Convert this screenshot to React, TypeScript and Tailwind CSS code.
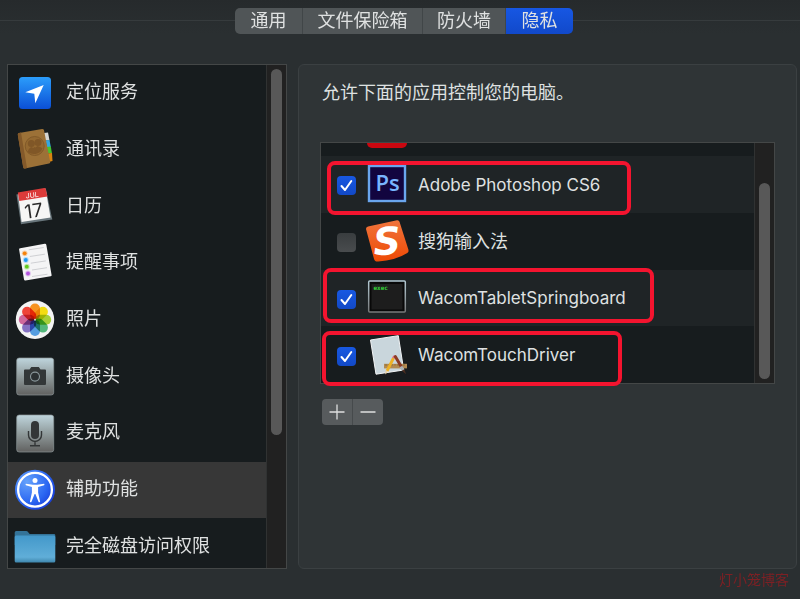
import { useState, type ReactNode } from "react";
import clsx from "clsx";

const tabs = [
  { name: "通用", width: "w-[68px]" },
  { name: "文件保险箱", width: "w-[120px]" },
  { name: "防火墙", width: "w-[83px]" },
  { name: "隐私", width: "w-[67px]" },
];

function Icon({ children }: { children: ReactNode }) {
  return (
    <svg viewBox="0 0 44 44" className="size-11 shrink-0 overflow-visible" aria-hidden="true">
      {children}
    </svg>
  );
}

function LocationIcon() {
  return (
    <Icon>
      <linearGradient id="loc" x1="0" y1="0" x2="0" y2="1">
        <stop offset="0" stopColor="#2b9dfb" />
        <stop offset="1" stopColor="#0b4fd6" />
      </linearGradient>
      <rect x="6" y="6" width="32" height="32" rx="3.5" fill="url(#loc)" />
      <path d="M30.7 14 12.3 21.3l9 1.4 1 9.6z" fill="#fff" />
    </Icon>
  );
}

function ContactsIcon() {
  return (
    <Icon>
      <path d="M31 5l4-.5 1.5 8h-5z" fill="#d5d5d2" />
      <path d="M32.500 12.500l4-.6 1.300 7h-4z" fill="#35a7e0" />
      <path d="M33.500 19l4.300-.6 1.200 7h-4z" fill="#47c32f" />
      <path d="M34.500 25.500l4.500-.6.500 8-4 1.200z" fill="#d98410" />
      <path d="M6 5l23-4q1.600-.2 2 1.300l6.200 31.500q.3 1.500-1.200 1.800L12 40.600q-1.500.2-1.800-1.300L4.800 6.700Q4.600 5.200 6 5z" fill="#9c7137" />
      <path d="M6 5l2-.4L14 40l-2 .6q-1.500.2-1.800-1.300L4.800 6.700Q4.600 5.200 6 5z" fill="#83592a" />
      <circle cx="21.7" cy="18" r="9.5" fill="#946931" stroke="#825a29" strokeWidth="1" />
      <g fill="#805727">
        <circle cx="18.3" cy="15.500" r="3.500" />
        <circle cx="25" cy="14.500" r="3.500" />
        <path d="M14.500 24q.5-3 3.500-5l2.500 1 1-1 1 .5 2-1.500q3 .5 5 2.500-2 4.500-7 5.500-4.500.5-8-2z" />
      </g>
    </Icon>
  );
}

function CalendarIcon() {
  return (
    <Icon>
      <path d="M3.400 9.500l29.500-5.500 6.400 30.500L8 39.200z" fill="#68757b" />
      <path d="M5 9l27.500-5.500L37.500 32.500 8.600 37z" fill="#f6f6f5" />
      <path d="M4.800 7.500L31.300 3q1.200-.1 1.500 1l1.600 7.500L6.300 16 4.800 7.500z" fill="#dc3b3a" />
      <g transform="rotate(-8 20 20)" textAnchor="middle" className="font-['Inter','Liberation_Sans',sans-serif]">
        <text x="20.5" y="12.700" fontSize="7" fill="#fff">JUL</text>
        <text x="20" y="32.5" fontSize="19" fill="#292929">17</text>
      </g>
    </Icon>
  );
}

function RemindersIcon() {
  const dots = [
    { x: 11.7, y: 12.3, color: "#f5820b" },
    { x: 12.8, y: 19, color: "#1d9bf6" },
    { x: 13.8, y: 25.7, color: "#5fcb1f" },
    { x: 15, y: 32.5, color: "#b254df" },
  ];
  return (
    <Icon>
      <path d="M7.200 7.200l24.500-4.500q1.300-.2 1.600 1l5.300 30.200q.2 1.200-1 1.400L12.500 39.500q-1.200.2-1.500-1L6.100 8.500q-.2-1.200 1.100-1.300z" fill="#f4f4f5" />
      {dots.map((d) => (
        <g key={d.color}>
          <circle cx={d.x} cy={d.y} r="2.9" fill={d.color} opacity="0.3" />
          <circle cx={d.x} cy={d.y} r="1.9" fill={d.color} />
          <path d={`M${d.x + 4} ${d.y - 3.5}l15-2.300`} stroke="#bfc0c4" strokeWidth="0.7" />
        </g>
      ))}
      <path d="M19 35.500l15.500-2.300" stroke="#bfc0c4" strokeWidth="0.7" />
    </Icon>
  );
}

function PhotosIcon() {
  const petals = ["#f79320", "#f3dc12", "#a6cf38", "#52b77a", "#559de0", "#8471c2", "#cf689c", "#ee4438"];
  return (
    <Icon>
      <circle cx="22" cy="21.7" r="19.2" fill="#f3f3f3" />
      <g className="isolate">
        {petals.map((color, i) => (
          <rect key={color} x="17" y="5.5" width="10" height="16" rx="5" fill={color} transform={`rotate(${i * 45} 22 21.7)`} className="mix-blend-multiply" />
        ))}
      </g>
      <circle cx="22" cy="21.7" r="1" fill="#fff" opacity="0.7" />
    </Icon>
  );
}

function MetalPlate({ y }: { y: number }) {
  return (
    <>
      <linearGradient id={`metal${y}`} x1="0" y1="0" x2="0" y2="1">
        <stop offset="0" stopColor="#bfd5dd" />
        <stop offset="0.5" stopColor="#909b9c" />
        <stop offset="1" stopColor="#616160" />
      </linearGradient>
      <rect x="3.7" y={y} width="37" height="37" rx="2.5" fill={`url(#metal${y})`} stroke="#8c9799" strokeWidth="0.7" />
    </>
  );
}

function CameraIcon() {
  return (
    <Icon>
      <MetalPlate y={3} />
      <path d="M12 14.500h4.500l1.800-2.600h7.500l1.700 2.600H32q1 0 1 1v13.500q0 1-1 1H12q-1 0-1-1V15.500q0-1 1-1z" fill="#333738" />
      <circle cx="22" cy="21.6" r="4.5" fill="#2b3032" stroke="#8a979b" strokeWidth="1.1" />
    </Icon>
  );
}

function MicIcon() {
  return (
    <Icon>
      <MetalPlate y={4} />
      <rect x="18" y="10" width="8" height="18" rx="4" fill="#333637" />
      <path d="M15.500 20v4a6.500 6.500 0 0 0 13 0v-4M22 30.500v4M17 34.700h10" fill="none" stroke="#333637" strokeWidth="1.4" />
    </Icon>
  );
}

function AccessibilityIcon() {
  return (
    <Icon>
      <radialGradient id="acc" cx="0.3" cy="0.3" r="0.85">
        <stop offset="0" stopColor="#65a2fb" />
        <stop offset="0.6" stopColor="#2c68f2" />
        <stop offset="1" stopColor="#1234d5" />
      </radialGradient>
      <circle cx="22" cy="21.7" r="20" fill="url(#acc)" />
      <circle cx="22" cy="21.7" r="16.9" fill="none" stroke="#fff" strokeWidth="2.3" />
      <circle cx="22" cy="12.5" r="2.5" fill="#fff" />
      <path d="M12.900 15.800l7 .9h4.200l7-.9q.8.700 0 1.500l-6 1.700v5.500l2 9.300q-.8 1-1.600 0L22.400 26h-.8l-3.100 7.800q-.9 1-1.600 0l2-9.300V19l-6-1.700q-.8-.8 0-1.500z" fill="#fff" />
    </Icon>
  );
}

function FolderIcon() {
  return (
    <Icon>
      <linearGradient id="folder" x1="0" y1="0" x2="0" y2="1">
        <stop offset="0" stopColor="#4398ca" />
        <stop offset="0.8" stopColor="#60aed8" />
        <stop offset="1" stopColor="#3f87ad" />
      </linearGradient>
      <path d="M1.700 7.500q0-1.500 1.500-1.500h10q1.200 0 2 1.200L16.700 9H41q1.300 0 1.300 1.300V20H1.700z" fill="#347398" />
      <rect x="1.7" y="10.5" width="40.6" height="27" rx="1.5" fill="url(#folder)" />
    </Icon>
  );
}

function PhotoshopIcon() {
  return (
    <Icon>
      <rect x="4" y="4" width="36" height="35" fill="#12053f" stroke="#6aa6ee" strokeWidth="2.4" />
      <text x="22.5" y="28.5" textAnchor="middle" fontSize="22" fill="#78b5ff" className="font-['Open_Sans','Noto_Sans',sans-serif] font-semibold">Ps</text>
    </Icon>
  );
}

function SogouIcon() {
  return (
    <Icon>
      <linearGradient id="sogou" x1="0" y1="0" x2="0" y2="1">
        <stop offset="0" stopColor="#f0743c" />
        <stop offset="1" stopColor="#ee4a05" />
      </linearGradient>
      <path d="M3 7.600L32 1.200q1.900-.3 2.500 1.500L43.500 31q.5 1.900-1.200 3-12 7.500-29 8.500-2 .2-3-.5-1-.8-1.400-2.500L1 10Q.8 8.200 3 7.600z" fill="url(#sogou)" />
      <text x="22" y="35.5" textAnchor="middle" fontSize="38" fill="#fff" transform="rotate(-3 22 22)" className="font-['DejaVu_Sans',sans-serif] font-bold italic">S</text>
    </Icon>
  );
}

function ExecIcon() {
  return (
    <Icon>
      <linearGradient id="frame" x1="0" y1="0" x2="0" y2="1">
        <stop offset="0" stopColor="#b3cad4" />
        <stop offset="1" stopColor="#77797a" />
      </linearGradient>
      <rect x="3.7" y="5" width="36.6" height="31" rx="1" fill="#080808" stroke="url(#frame)" strokeWidth="1.5" />
      <rect x="6.5" y="8" width="31" height="25.5" fill="#1d1d1d" />
      <text x="8.500" y="14" fontSize="6" fill="#35d13b" className="font-['DejaVu_Sans_Mono',monospace] font-bold">exec</text>
    </Icon>
  );
}

function AppIcon() {
  return (
    <Icon>
      <path d="M5.500 7L33.300 2.700 38.700 37 11 41.200z" fill="#c9d6dc" stroke="#f2f4f5" strokeWidth="1" />
      <rect x="19" y="30.8" width="23" height="4.6" fill="#b28a51" />
      <path d="M21 31v2M24 31v1.500M27 31v2M30 31v1.500M33 31v2M36 31v1.500M39 31v2" stroke="#7b5a30" strokeWidth="0.6" />
      <path d="M28.500 25L22 38" stroke="#edb125" strokeWidth="2.8" />
      <path d="M29.500 23l-1 2.300" stroke="#dc6b84" strokeWidth="2.800" />
      <path d="M23.300 38.500l-3 3 .3-4.200z" fill="#e7d1a7" />
      <path d="M30.300 23.500L36.500 34" stroke="#8b3b24" strokeWidth="3" strokeLinecap="round" />
      <path d="M36 33.500l2 3.500" stroke="#a9b1b4" strokeWidth="3" />
      <path d="M36.800 37.800l2.500-1.500 1.800 5z" fill="#4b2d20" />
    </Icon>
  );
}

const services = [
  { name: "定位服务", icon: <LocationIcon /> },
  { name: "通讯录", icon: <ContactsIcon /> },
  { name: "日历", icon: <CalendarIcon /> },
  { name: "提醒事项", icon: <RemindersIcon /> },
  { name: "照片", icon: <PhotosIcon /> },
  { name: "摄像头", icon: <CameraIcon /> },
  { name: "麦克风", icon: <MicIcon /> },
  { name: "辅助功能", icon: <AccessibilityIcon /> },
  { name: "完全磁盘访问权限", icon: <FolderIcon /> },
];

const apps = [
  { name: "Adobe Photoshop CS6", lang: "en", icon: <PhotoshopIcon />, allowed: true },
  { name: "搜狗输入法", lang: "zh", icon: <SogouIcon />, allowed: false },
  { name: "WacomTabletSpringboard", lang: "en", icon: <ExecIcon />, allowed: true },
  { name: "WacomTouchDriver", lang: "en", icon: <AppIcon />, allowed: true },
];

type AppRowProps = { name: string; lang: string; icon: ReactNode; allowed: boolean };

function AppRow({ name, lang, icon, allowed }: AppRowProps) {
  const [checked, setChecked] = useState(allowed);
  return (
    <label className="flex items-center pl-4 odd:bg-[#1f2426]">
      <span className="mt-[3px] grid shrink-0">
        <input
          type="checkbox"
          checked={checked}
          onChange={() => setChecked(!checked)}
          className="col-start-1 row-start-1 size-[19px] appearance-none rounded bg-linear-to-b from-[#393d3f] to-[#494c4e] checked:from-[#1858e2] checked:to-[#1249c6]"
        />
        {checked && (
          <svg viewBox="0 0 19 19" className="pointer-events-none col-start-1 row-start-1 size-[19px]" aria-hidden="true">
            <path d="M4.500 10l3.500 4 6.300-9" fill="none" stroke="#fff" strokeWidth="2" strokeLinecap="round" strokeLinejoin="round" />
          </svg>
        )}
      </span>
      <span className="ml-[9px]">{icon}</span>
      <span lang={lang} className="ml-[9px] whitespace-nowrap pt-px lang-en:text-[17px] [&:lang(en)]:text-[17px]">
        {name}
      </span>
    </label>
  );
}

export default function App() {
  const [tab, setTab] = useState("隐私");
  const [service, setService] = useState("辅助功能");

  return (
    <main className="relative min-h-screen bg-[#2a2f31] font-['Inter','Noto_Sans_CJK_SC',sans-serif] text-[18px] leading-6 text-[#dfe1e1]">
      <header className="flex items-start bg-linear-to-b from-[#262a2c] to-[#2a2f31] pt-2">
        <span className="mt-3 h-px flex-1 bg-[#363b3d] pl-2" />
        <nav className="flex overflow-hidden rounded-[5px]">
          {tabs.map((t) => (
            <button
              key={t.name}
              onClick={() => setTab(t.name)}
              className={clsx(
                t.width,
                "h-[26px] whitespace-nowrap border-r last:border-r-0",
                tab === t.name ? "border-[#1450d5] bg-linear-to-b from-[#1757e3] to-[#1149ca]" : "border-[#414648] bg-[#505557]",
              )}
            >
              {t.name}
            </button>
          ))}
        </nav>
        <span className="mt-3 h-px flex-1 bg-[#363b3d]" />
      </header>

      <div className="flex gap-[11px] pt-[30px] pr-[3px] pb-[30px] pl-[7px]">
        <aside className="flex h-[505px] w-[280px] shrink-0 overflow-hidden border border-[#444747] bg-[#171c1e]">
          <div className="grid h-[510px] flex-1 grid-rows-9">
            {services.map((s) => (
              <button
                key={s.name}
                onClick={() => setService(s.name)}
                className={clsx("flex items-center pl-[5px] text-left", service === s.name && "bg-[#373737]")}
              >
                {s.icon}
                <span className="ml-[9px] whitespace-nowrap pb-[2px]">{s.name}</span>
              </button>
            ))}
          </div>
          <div className="w-5 border-l border-[#303232] bg-[#212121] pt-1 pl-1">
            <div className="h-[366px] w-[11px] rounded-full bg-[#585858]" />
          </div>
        </aside>

        <section className="min-w-0 flex-1 rounded-md border border-[#3b4042] bg-[#2f3436] pt-4 pr-[21px] pl-[21px]">
          <h1 className="pl-[2px]">允许下面的应用控制您的电脑。</h1>
          <div className="relative mt-[37px]">
            <div className="flex border border-[#444747] bg-[#171c1e]">
              <div className="min-w-0 flex-1">
                <div className="h-[13px] pl-[46px]">
                  <div className="h-[5px] w-10 rounded-b-full bg-[#ca0710]" />
                </div>
                <div className="grid h-[227px] grid-rows-4">
                  {apps.map((a) => (
                    <AppRow key={a.name} {...a} />
                  ))}
                </div>
              </div>
              <div className="flex w-5 flex-col justify-end border-l border-[#303232] bg-[#212121] pb-1 pl-1">
                <div className="h-[196px] w-[11px] rounded-full bg-[#585858]" />
              </div>
            </div>
            <span className="pointer-events-none absolute top-[19px] left-[7px] h-[54px] w-[304px] rounded-lg border-4 border-[#f4142f]" />
            <span className="pointer-events-none absolute top-[126px] left-[3px] h-[55px] w-[331px] rounded-lg border-4 border-[#f4142f]" />
            <span className="pointer-events-none absolute top-[189px] left-[2px] h-[55px] w-[300px] rounded-lg border-4 border-[#f4142f]" />
          </div>
          <div className="mt-[15px] ml-[2px] flex w-[61px] overflow-hidden rounded bg-[#575b5d]">
            <button aria-label="添加" className="grid h-[26px] flex-1 place-items-center border-r border-[#464a4c]">
              <svg viewBox="0 0 16 16" className="size-4" aria-hidden="true">
                <path d="M.5 8h15M8 .5v15" stroke="#dfe0e0" strokeWidth="1.3" />
              </svg>
            </button>
            <button aria-label="移除" className="grid h-[26px] flex-1 place-items-center">
              <svg viewBox="0 0 16 16" className="size-4" aria-hidden="true">
                <path d="M.5 8h15" stroke="#dfe0e0" strokeWidth="1.3" />
              </svg>
            </button>
          </div>
        </section>
      </div>

      <span className="absolute right-[11px] bottom-[10px] font-['Noto_Sans_CJK_SC',sans-serif] text-sm leading-5 text-[#7c2024]">灯小笼博客</span>
    </main>
  );
}
